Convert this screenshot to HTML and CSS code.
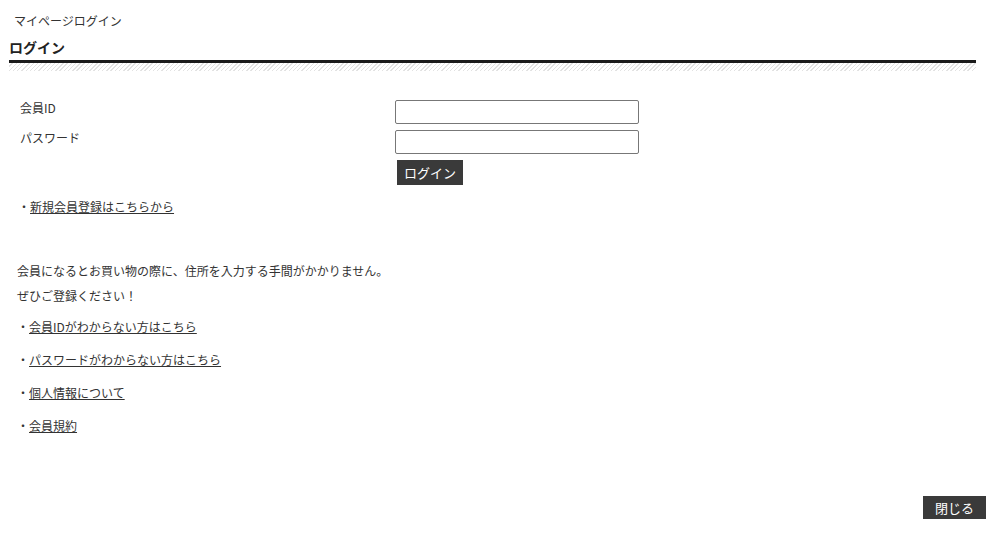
FILE: index.html
```html
<!DOCTYPE html>
<html lang="ja">
<head>
    <meta charset="UTF-8">
    <title>マイページログイン</title>
    <link rel="stylesheet" href="styles.css">
</head>
<body>
    <p class="page-title">マイページログイン</p>
    <h2 class="heading">ログイン</h2>
    <div class="hatch"></div>

    <form class="login-form">
        <label for="member-id">会員ID</label>
        <input type="text" id="member-id">
        <label for="password">パスワード</label>
        <input type="password" id="password">
        <span></span>
        <button type="button" class="btn">ログイン</button>
    </form>

    <p class="link-line first">・<a href="#">新規会員登録はこちらから</a></p>

    <div class="info">
        <p>会員になるとお買い物の際に、住所を入力する手間がかかりません。</p>
        <p>ぜひご登録ください！</p>
    </div>

    <ul class="links">
        <li>・<a href="#">会員IDがわからない方はこちら</a></li>
        <li>・<a href="#">パスワードがわからない方はこちら</a></li>
        <li>・<a href="#">個人情報について</a></li>
        <li>・<a href="#">会員規約</a></li>
    </ul>

    <div class="footer">
        <button type="button" class="btn close-btn">閉じる</button>
    </div>
</body>
</html>
```

FILE: styles.css
```css
* { margin: 0; padding: 0; box-sizing: border-box; }
body { font-family: "Noto Sans CJK JP", "Noto Sans", sans-serif; font-size: 12px; color: #333; background: #fff; padding: 0 14px 0 9px; }

.page-title { padding: 13px 0 0 5px; line-height: 16px; color: #333; }
.heading { margin: 9px 10px 0 0; font-size: 14px; line-height: 18px; font-weight: bold; color: #222; padding-bottom: 4px; border-bottom: 3px solid #1a1a1a; }
.hatch { height: 8px; margin-right: 10px; background: repeating-linear-gradient(135deg, #fff 0 2px, #e2e2e2 2px 3px); }

.login-form { display: grid; grid-template-columns: 375px 244px; row-gap: 6px; margin: 29px 0 0 11px; align-items: start; }
.login-form label { line-height: 16px; color: #333; }
.login-form input { width: 244px; height: 24px; border: 1px solid #777; border-radius: 2px; padding: 0 4px; font-size: 12px; }
.btn { background: #3a3a3a; color: #fff; border: none; font-family: inherit; font-size: 13px; line-height: 20px; cursor: pointer; }
.login-form .btn { justify-self: start; margin-left: 2px; width: 66px; height: 25px; }

.link-line { margin: 14px 0 0 9px; line-height: 16px; }
a { color: #333; text-decoration: underline; }

.info { margin: 43px 0 0 8px; }
.info p { line-height: 25px; }

.links { list-style: none; margin: 11px 0 0 8px; }
.links li { line-height: 16px; margin-bottom: 17px; }

.footer { display: flex; justify-content: flex-end; margin-top: 62px; }
.close-btn { width: 63px; height: 23px; }
```
